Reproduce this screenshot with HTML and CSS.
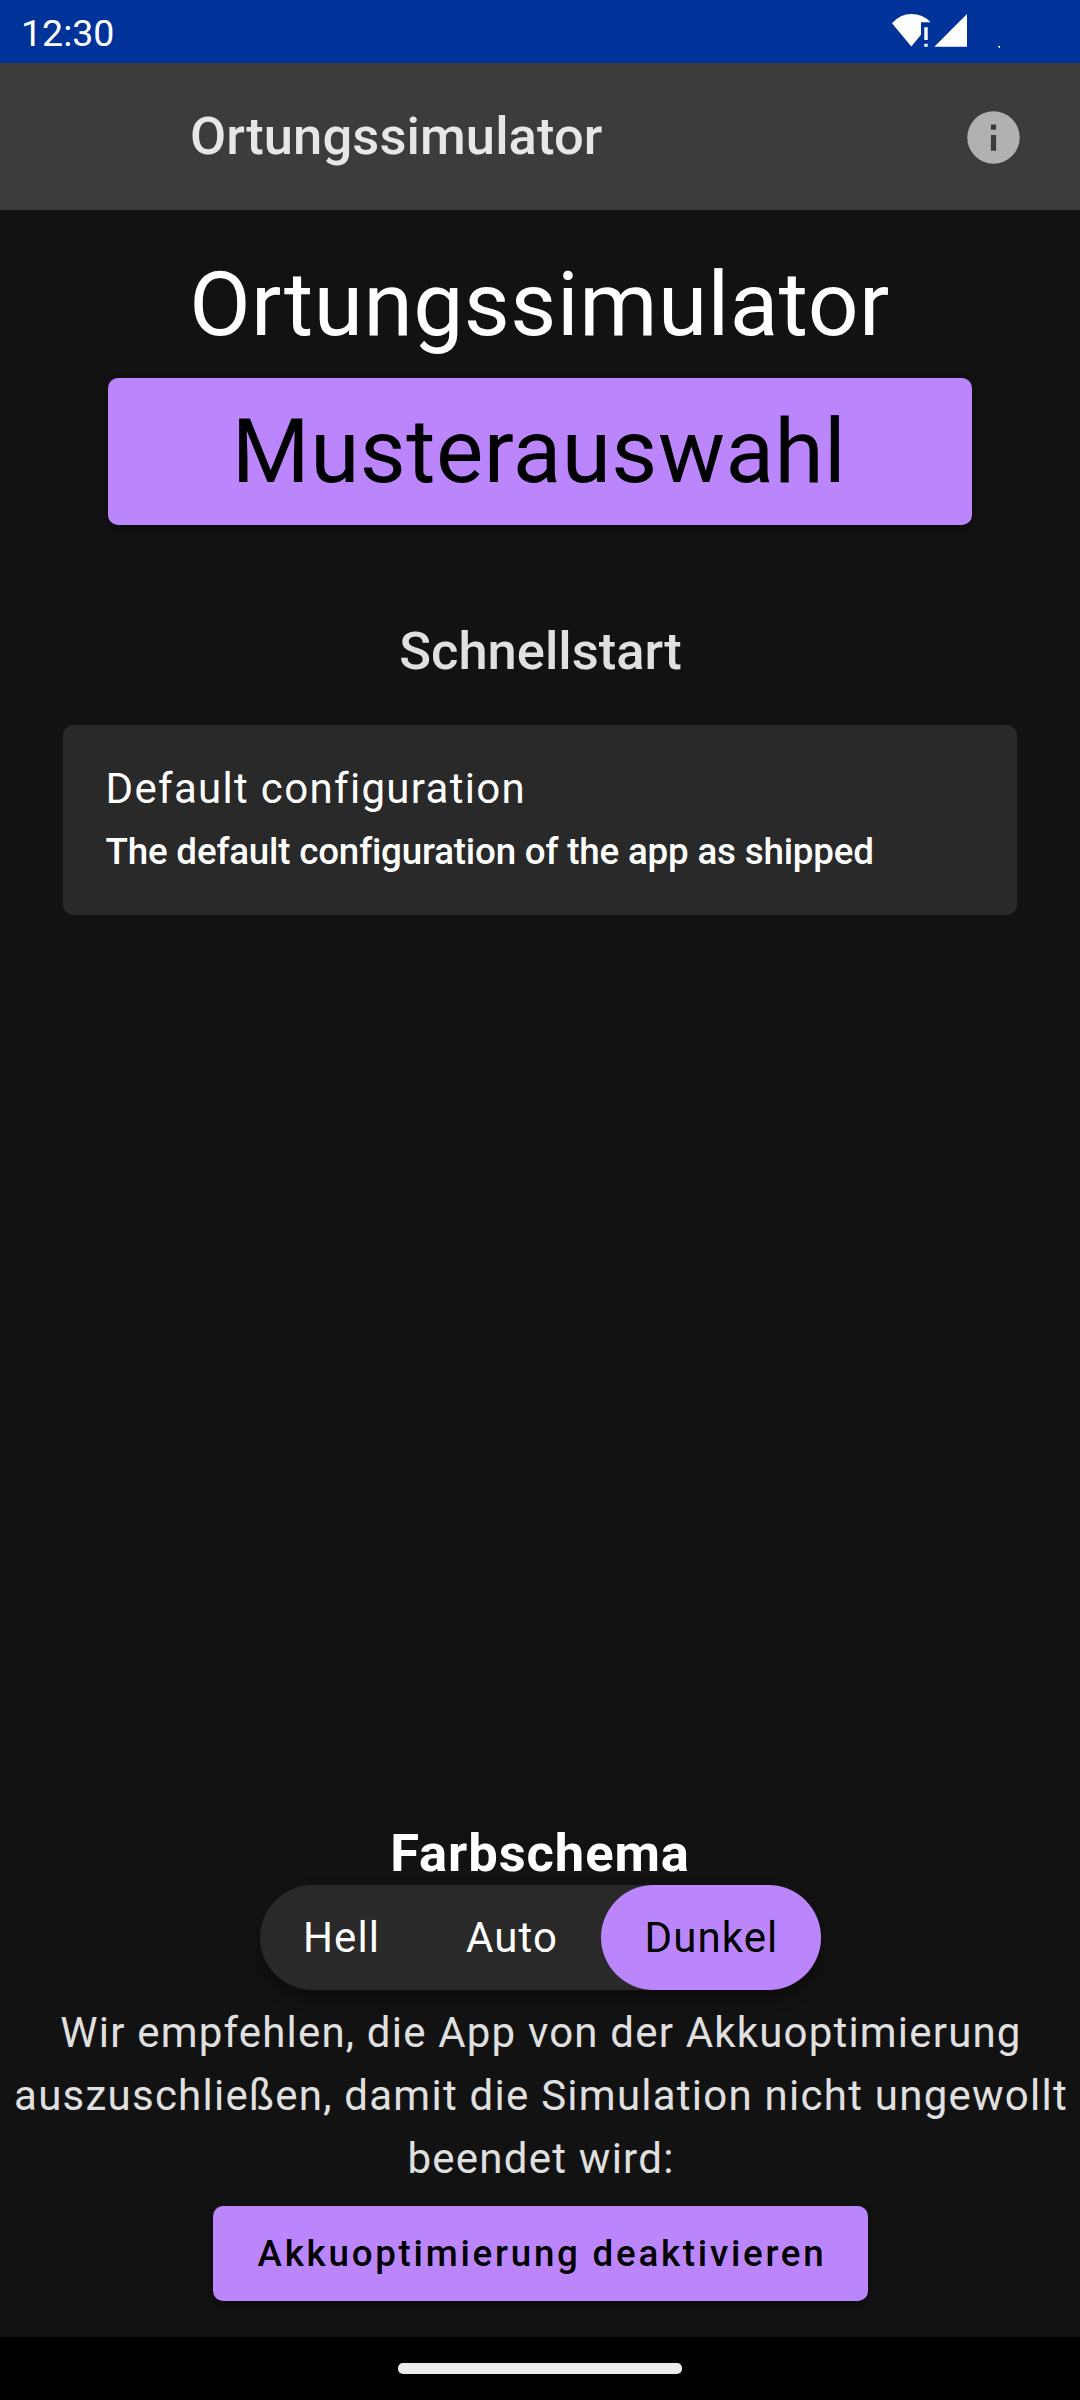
FILE: index.html
```html
<!DOCTYPE html>
<html lang="de">
<head>
<meta charset="utf-8">
<title>Ortungssimulator</title>
<link rel="stylesheet" href="styles.css">
</head>
<body>
<header class="status">
  <span class="clock">12:30</span>
  <svg class="status-icons" width="120" height="40" viewBox="0 0 120 40" fill="#fff"><path d="M1 10.3Q9 1 20.5 1T39.5 9.3H30V21.8L20.3 33.5Z"/><path d="M33.3 14.3h3.4V27h-3.4zM33.3 30.7h3.4v3h-3.4zM76 1V33.7H43.3ZM107 33h2v2h-1v-1h-1z"/></svg>
</header>
<div class="appbar">
  <span class="appbar-title">Ortungssimulator</span>
  <svg class="info" width="63" height="63" viewBox="0 0 24 24"><path fill="#b1b1b1" d="M12 2a10 10 0 1 0 0 20 10 10 0 0 0 0-20zm1 15h-2v-6h2zm0-8h-2V7h2z"/></svg>
</div>
<main class="content">
  <h1 class="title"><span>Ortungssimulator</span></h1>
  <button class="btn choose"><span>Musterauswahl</span></button>
  <h2 class="quick"><span>Schnellstart</span></h2>
  <section class="card">
    <div class="card-title"><span>Default configuration</span></div>
    <div class="card-text"><span>The default configuration of the app as shipped</span></div>
  </section>
  <div class="spacer"></div>
  <h2 class="scheme"><span>Farbschema</span></h2>
  <div class="toggle"><span class="opt hell">Hell</span><span class="opt auto">Auto</span><span class="opt selected">Dunkel</span></div>
  <p class="hint"><span>Wir empfehlen, die App von der Akkuoptimierung</span><br><span>auszuschließen, damit die Simulation nicht ungewollt</span><br><span>beendet wird:</span></p>
  <button class="btn battery"><span>Akkuoptimierung deaktivieren</span></button>
</main>
<footer class="nav"><div class="pill"></div></footer>
</body>
</html>
```
FILE: styles.css
```css
* { box-sizing: border-box; }
body { margin: 0; width: 1080px; height: 2400px; display: flex; flex-direction: column; background: #121212; color: #fff; font-family: Roboto, sans-serif; overflow: hidden; }
h1, h2, p { margin: 0; }
.status { height: 63px; background: #039; display: flex; justify-content: space-between; padding: 0 69px 0 21px; }
.clock { font-size: 37.5px; line-height: 66px; }
.status-icons { margin-top: 13px; }
.appbar { height: 147px; background: #3c3c3c; display: flex; align-items: center; justify-content: space-between; padding: 0 55px 0 190px; }
.appbar-title { font-size: 52.5px; font-weight: 500; line-height: 62px; letter-spacing: 0.1px; color: #e7e7e7; margin-bottom: 2px; }
.info { margin-top: 2px; }
.content { flex: 1; display: flex; flex-direction: column; align-items: center; padding-top: 43px; }
.title { font-size: 89.25px; font-weight: 400; line-height: 104px; height: 125px; padding-right: 1px; letter-spacing: 0.5px; white-space: nowrap; }
.btn { border: 0; border-radius: 10px; background: #bb86fc; color: #000; font-family: inherit; padding: 0; box-shadow: 0 4px 8px #0005; }
.choose { width: 864px; height: 147px; padding-right: 2px; font-size: 89.25px; letter-spacing: 0.45px; }
.quick { margin-top: 95px; padding-left: 1px; font-size: 52.5px; font-weight: 500; line-height: 62px; color: #e0e0e0; }
.card { width: 954px; height: 190px; margin-top: 43px; border-radius: 10px; background: #292929; padding: 39px 42.5px; }
.card-title { font-size: 42px; line-height: 49px; letter-spacing: 1.32px; }
.card-text { font-size: 36.75px; font-weight: 500; line-height: 43px; letter-spacing: -0.19px; font-variant-ligatures: common-ligatures; margin-top: 17px; }
.spacer { flex: 1; }
.scheme { font-size: 52.5px; font-weight: 700; line-height: 62px; letter-spacing: 0.93px; margin-bottom: 1px; }
.toggle { display: flex; width: 561px; height: 105px; border-radius: 53px; background: #292929; font-size: 42px; letter-spacing: 1.1px; box-shadow: 0 8px 16px #0005; }
.opt { display: flex; align-items: center; justify-content: center; padding-left: 2px; }
.hell { width: 162px; }
.auto { width: 179px; }
.selected { width: 220px; border-radius: 53px; background: #bb86fc; color: #000; }
.hint { margin-top: 11px; padding-left: 2px; font-size: 42px; line-height: 63px; letter-spacing: 1.25px; text-align: center; color: #e0e0e0; white-space: nowrap; }
.hint span:first-child { letter-spacing: 1.19px; }
.battery { width: 655px; height: 95px; margin: 16px 0 36px; padding-left: 4px; font-size: 36.75px; font-weight: 500; letter-spacing: 2.74px; }
.nav { height: 63px; background: #000; display: flex; align-items: center; justify-content: center; }
.pill { width: 284px; height: 11px; border-radius: 5px; background: #ececec; }
```
